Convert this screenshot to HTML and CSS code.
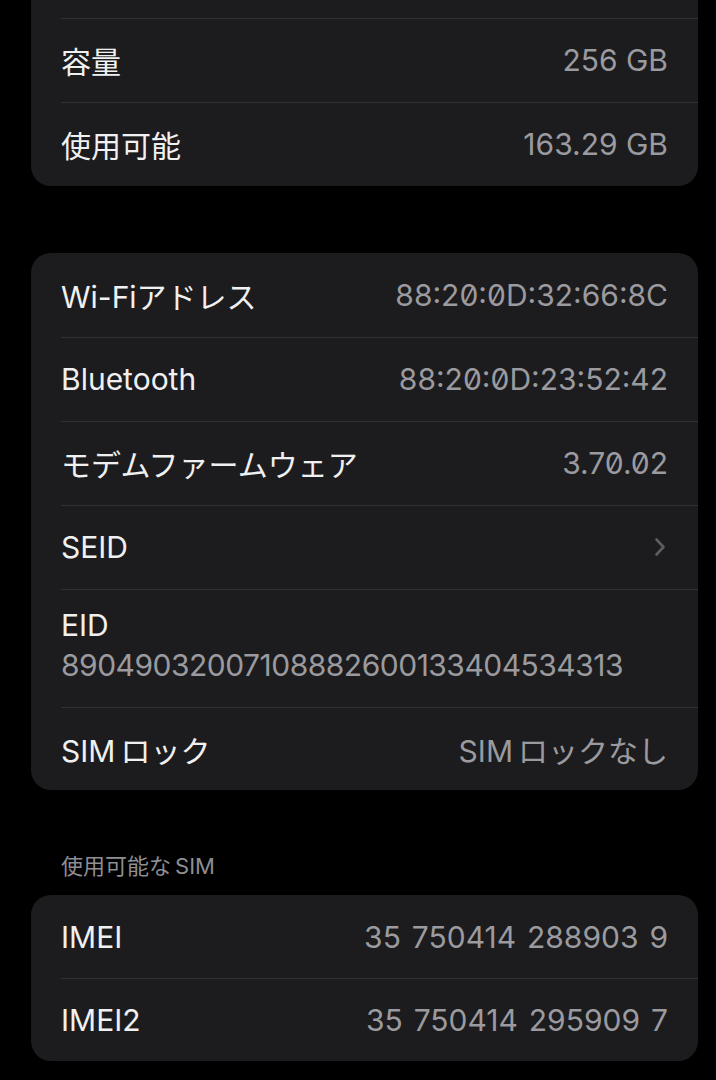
FILE: index.html
```html
<!DOCTYPE html>
<html lang="ja">
<head>
<meta charset="utf-8">
<link rel="stylesheet" href="styles.css">
</head>
<body>
<main class="page">
  <section class="card card--first">
    <div class="row"><span class="label"></span><span class="value"></span></div>
    <div class="row"><span class="label">容量</span><span class="value">256 GB</span></div>
    <div class="row"><span class="label">使用可能</span><span class="value">163.29 GB</span></div>
  </section>

  <section class="card card--second">
    <div class="row"><span class="label">Wi-Fiアドレス</span><span class="value value--zero">88:20:0D:32:66:8C</span></div>
    <div class="row"><span class="label">Bluetooth</span><span class="value value--zero">88:20:0D:23:52:42</span></div>
    <div class="row"><span class="label">モデムファームウェア</span><span class="value value--zero">3.70.02</span></div>
    <div class="row"><span class="label">SEID</span>
      <svg class="chevron" width="12" height="20" viewBox="0 0 12 20"><path d="M2.5 2.5 L9.5 10 L2.5 17.5" fill="none" stroke="#5c5c61" stroke-width="2.6" stroke-linecap="round" stroke-linejoin="round"/></svg>
    </div>
    <div class="row row--stack"><span class="label">EID</span><span class="value value--sub">89049032007108882600133404534313</span></div>
    <div class="row row--short"><span class="label">SIM<span class="gap"></span>ロック</span><span class="value">SIM<span class="gap"></span>ロックなし</span></div>
  </section>

  <h2 class="header">使用可能な<span class="gap gap--small"></span>SIM</h2>
  <section class="card">
    <div class="row row--short"><span class="label">IMEI</span><span class="value value--spaced">35 750414 288903 9</span></div>
    <div class="row row--short"><span class="label">IMEI2</span><span class="value value--spaced">35 750414 295909 7</span></div>
  </section>
</main>
</body>
</html>
```

FILE: styles.css
```css
html, body {
  margin: 0;
  padding: 0;
  background: #000;
}
body {
  font-family: "Inter", "Noto Sans CJK JP", sans-serif;
  -webkit-font-smoothing: antialiased;
}
.page {
  width: 667px;
  padding-left: 31px;
  overflow: hidden;
  height: 1080px;
}
.card {
  background: #1c1c1e;
  border-radius: 20px;
  overflow: hidden;
}
.card--first {
  margin-top: -66px;
}
.card--second {
  margin-top: 67px;
}
.row {
  position: relative;
  height: 84px;
  display: flex;
  align-items: center;
  justify-content: space-between;
  padding: 0 30px;
  box-sizing: border-box;
}
.row--short {
  height: 83px;
}
.row + .row::before {
  content: "";
  position: absolute;
  top: 0;
  left: 30px;
  right: 0;
  height: 1px;
  background: #313134;
}
.label {
  color: #f0f0f0;
  font-size: 30px;
  letter-spacing: 0;
}
.value {
  color: #9a9a9f;
  font-size: 30px;
  letter-spacing: 0;
}
.value--zero {
  font-feature-settings: "zero" 1;
}
.value--spaced {
  word-spacing: 2.5px;
}
.gap {
  display: inline-block;
  width: 5px;
}
.gap--small {
  width: 4px;
}
.row--stack {
  height: 118px;
  flex-direction: column;
  align-items: flex-start;
  justify-content: flex-start;
  padding-top: 17px;
}
.row--stack .label {
  line-height: 38px;
}
.value--sub {
  line-height: 40px;
  margin-top: 1px;
  letter-spacing: -0.5px;
}
.chevron {
  margin-right: 2px;
}
.header {
  margin: 61px 0 0 30px;
  height: 44px;
  font-size: 22px;
  font-weight: 400;
  color: #8e8e93;
  line-height: 30px;
}
```
